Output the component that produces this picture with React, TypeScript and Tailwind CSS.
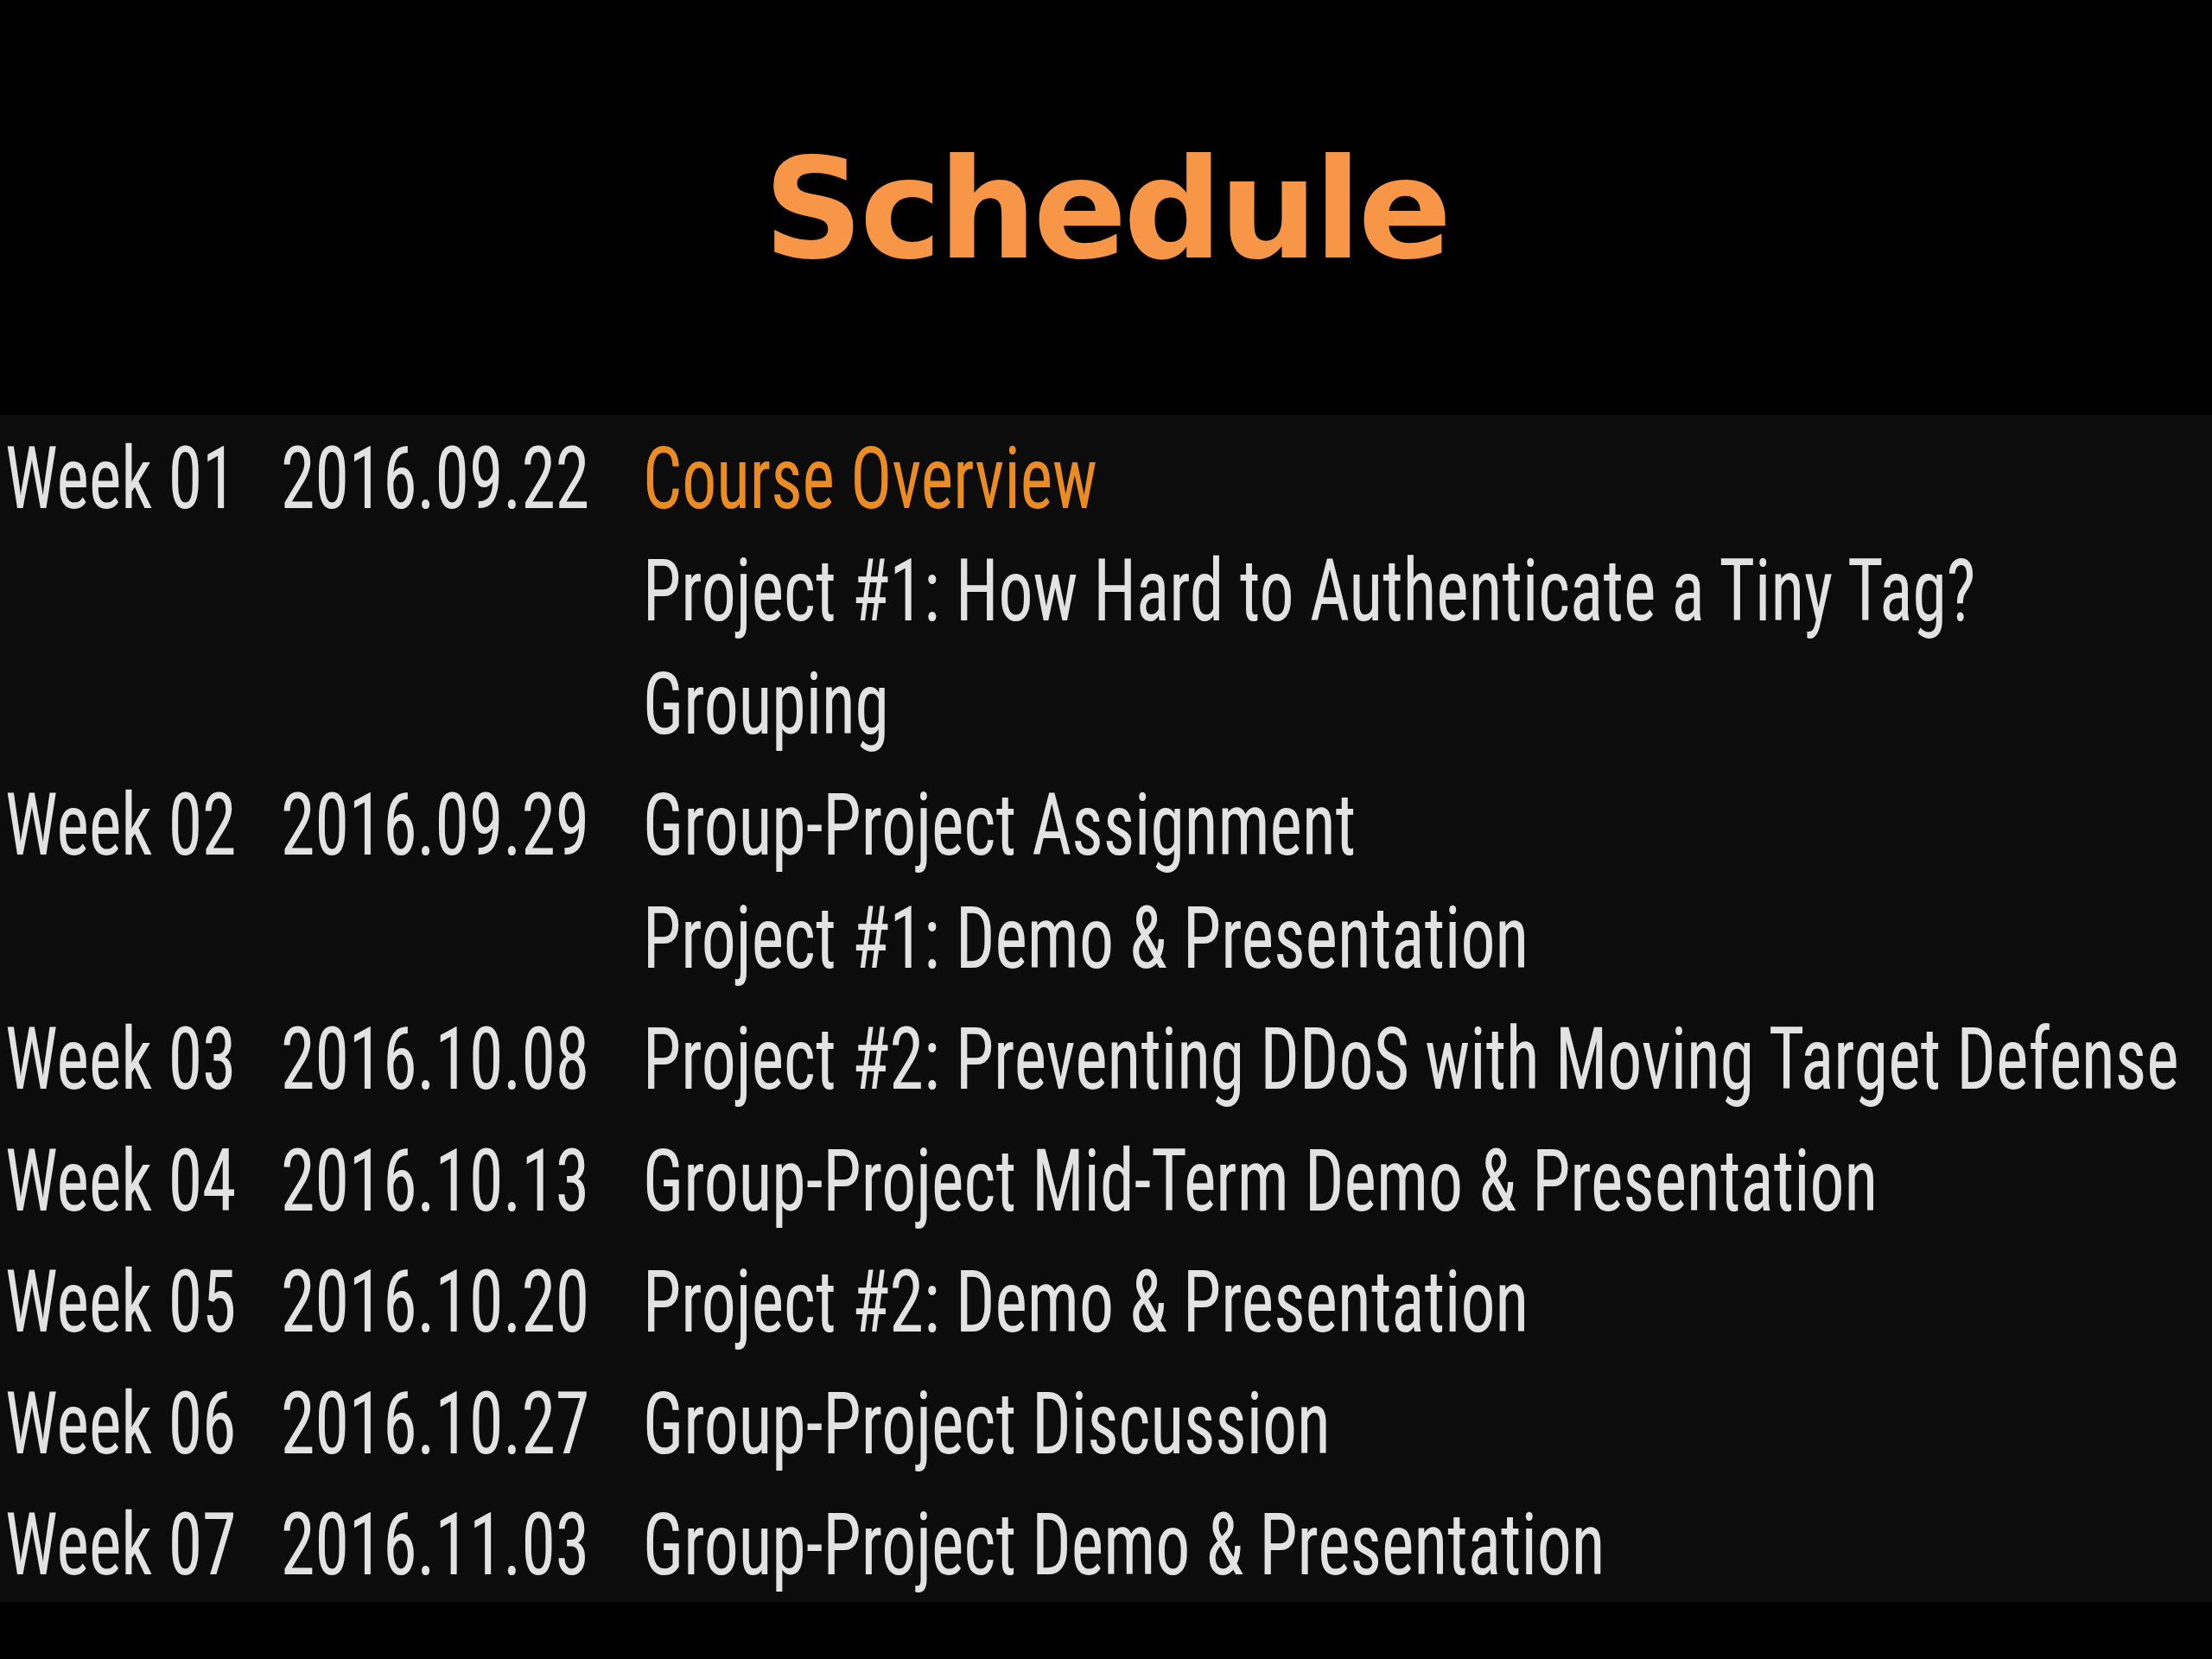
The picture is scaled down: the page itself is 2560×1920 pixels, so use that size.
import React from "react";

type Row = { week: string; date: string; items: { text: string; accent?: boolean }[] };

const rows: Row[] = [
  {
    week: "Week 01",
    date: "2016.09.22",
    items: [
      { text: "Course Overview", accent: true },
      { text: "Project #1: How Hard to Authenticate a Tiny Tag?" },
      { text: "Grouping" },
    ],
  },
  {
    week: "Week 02",
    date: "2016.09.29",
    items: [{ text: "Group-Project Assignment" }, { text: "Project #1: Demo & Presentation" }],
  },
  { week: "Week 03", date: "2016.10.08", items: [{ text: "Project #2: Preventing DDoS with Moving Target Defense" }] },
  { week: "Week 04", date: "2016.10.13", items: [{ text: "Group-Project Mid-Term Demo & Presentation" }] },
  { week: "Week 05", date: "2016.10.20", items: [{ text: "Project #2: Demo & Presentation" }] },
  { week: "Week 06", date: "2016.10.27", items: [{ text: "Group-Project Discussion" }] },
  { week: "Week 07", date: "2016.11.03", items: [{ text: "Group-Project Demo & Presentation" }] },
];

function Cond({ children, accent }: { children: React.ReactNode; accent?: boolean }) {
  return (
    <div className="h-[130.5px] overflow-visible">
      <span
        className={
          "inline-block origin-left scale-x-[0.79] whitespace-nowrap " +
          (accent ? "text-[#ea8c22]" : "text-[#e2e2e2]")
        }
      >
        {children}
      </span>
    </div>
  );
}

export default function App() {
  return (
    <div className="min-h-screen w-full overflow-hidden bg-black">
      <header className="h-[480px] pt-[163px]">
        <h1 className="text-center font-['DejaVu_Sans',sans-serif] text-[160px] font-bold leading-none tracking-[-0.025em] text-[#f79646]">
          Schedule
        </h1>
      </header>
      <div className="flex flex-col gap-[10px] bg-[#0c0c0c] pt-[8.5px] font-['Roboto_Condensed','Liberation_Sans',sans-serif] text-[101px] font-normal leading-[130.5px]">
        {rows.map((r) => (
          <div key={r.week} className="flex">
            <div className="w-[325px] shrink-0 pl-[6px]">
              <Cond>{r.week}</Cond>
            </div>
            <div className="w-[419px] shrink-0">
              <Cond>{r.date}</Cond>
            </div>
            <div className="min-w-0 flex-1">
              {r.items.map((it) => (
                <Cond key={it.text} accent={it.accent}>
                  {it.text}
                </Cond>
              ))}
            </div>
          </div>
        ))}
      </div>
    </div>
  );
}
